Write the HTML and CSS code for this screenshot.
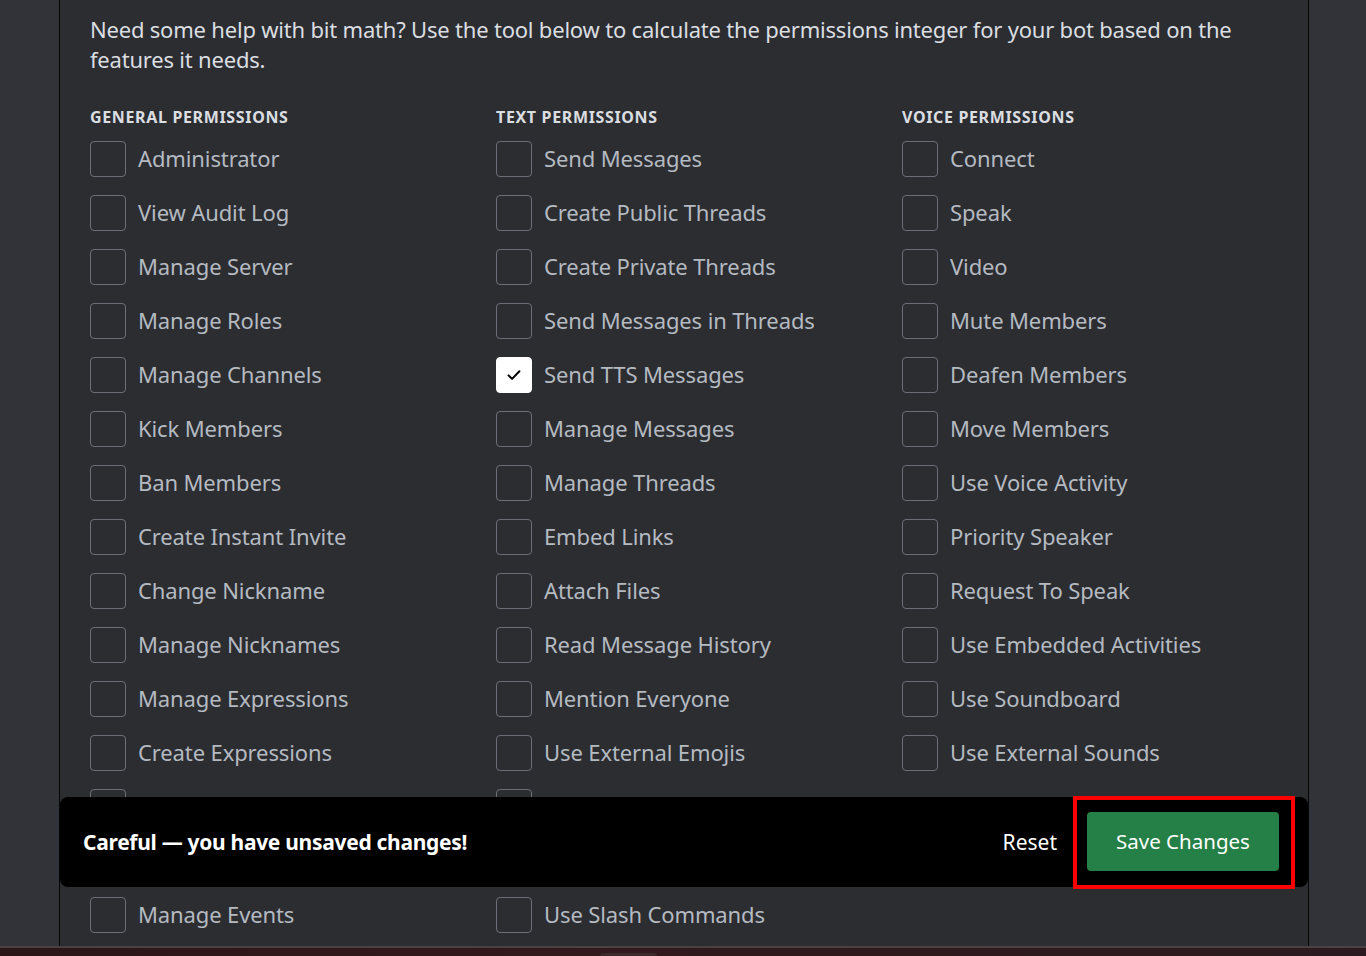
FILE: index.html
```html
<!DOCTYPE html>
<html>
<head>
<meta charset="utf-8">
<link rel="stylesheet" href="styles.css">
</head>
<body>
<div class="screen">
  <div class="main-row">
    <div class="gutter"></div>
    <div class="panel">
      <p class="intro">Need some help with bit math? Use the tool below to calculate the permissions integer for your bot based on the features it needs.</p>
      <div class="columns">
        <div class="col">
          <h3 class="col-title">General Permissions</h3>
          <label class="perm"><span class="box"></span><span class="lbl">Administrator</span></label>
          <label class="perm"><span class="box"></span><span class="lbl">View Audit Log</span></label>
          <label class="perm"><span class="box"></span><span class="lbl">Manage Server</span></label>
          <label class="perm"><span class="box"></span><span class="lbl">Manage Roles</span></label>
          <label class="perm"><span class="box"></span><span class="lbl">Manage Channels</span></label>
          <label class="perm"><span class="box"></span><span class="lbl">Kick Members</span></label>
          <label class="perm"><span class="box"></span><span class="lbl">Ban Members</span></label>
          <label class="perm"><span class="box"></span><span class="lbl">Create Instant Invite</span></label>
          <label class="perm"><span class="box"></span><span class="lbl">Change Nickname</span></label>
          <label class="perm"><span class="box"></span><span class="lbl">Manage Nicknames</span></label>
          <label class="perm"><span class="box"></span><span class="lbl">Manage Expressions</span></label>
          <label class="perm"><span class="box"></span><span class="lbl">Create Expressions</span></label>
          <label class="perm"><span class="box"></span><span class="lbl">Manage Webhooks</span></label>
          <label class="perm"><span class="box"></span><span class="lbl">View Channels</span></label>
          <label class="perm"><span class="box"></span><span class="lbl">Manage Events</span></label>
        </div>
        <div class="col">
          <h3 class="col-title">Text Permissions</h3>
          <label class="perm"><span class="box"></span><span class="lbl">Send Messages</span></label>
          <label class="perm"><span class="box"></span><span class="lbl">Create Public Threads</span></label>
          <label class="perm"><span class="box"></span><span class="lbl">Create Private Threads</span></label>
          <label class="perm"><span class="box"></span><span class="lbl">Send Messages in Threads</span></label>
          <label class="perm"><span class="box checked"><svg viewBox="0 0 24 24" width="20" height="20"><path d="M5.5 12.5l4.2 4.2 8.8-9.2" fill="none" stroke="#000" stroke-width="2.4" stroke-linecap="round" stroke-linejoin="round"/></svg></span><span class="lbl">Send TTS Messages</span></label>
          <label class="perm"><span class="box"></span><span class="lbl">Manage Messages</span></label>
          <label class="perm"><span class="box"></span><span class="lbl">Manage Threads</span></label>
          <label class="perm"><span class="box"></span><span class="lbl">Embed Links</span></label>
          <label class="perm"><span class="box"></span><span class="lbl">Attach Files</span></label>
          <label class="perm"><span class="box"></span><span class="lbl">Read Message History</span></label>
          <label class="perm"><span class="box"></span><span class="lbl">Mention Everyone</span></label>
          <label class="perm"><span class="box"></span><span class="lbl">Use External Emojis</span></label>
          <label class="perm"><span class="box"></span><span class="lbl">Use External Stickers</span></label>
          <label class="perm"><span class="box"></span><span class="lbl">Add Reactions</span></label>
          <label class="perm"><span class="box"></span><span class="lbl">Use Slash Commands</span></label>
        </div>
        <div class="col">
          <h3 class="col-title">Voice Permissions</h3>
          <label class="perm"><span class="box"></span><span class="lbl">Connect</span></label>
          <label class="perm"><span class="box"></span><span class="lbl">Speak</span></label>
          <label class="perm"><span class="box"></span><span class="lbl">Video</span></label>
          <label class="perm"><span class="box"></span><span class="lbl">Mute Members</span></label>
          <label class="perm"><span class="box"></span><span class="lbl">Deafen Members</span></label>
          <label class="perm"><span class="box"></span><span class="lbl">Move Members</span></label>
          <label class="perm"><span class="box"></span><span class="lbl">Use Voice Activity</span></label>
          <label class="perm"><span class="box"></span><span class="lbl">Priority Speaker</span></label>
          <label class="perm"><span class="box"></span><span class="lbl">Request To Speak</span></label>
          <label class="perm"><span class="box"></span><span class="lbl">Use Embedded Activities</span></label>
          <label class="perm"><span class="box"></span><span class="lbl">Use Soundboard</span></label>
          <label class="perm"><span class="box"></span><span class="lbl">Use External Sounds</span></label>
        </div>
      </div>
      <div class="notice">
        <span class="notice-text">Careful — you have unsaved changes!</span>
        <div class="notice-actions">
          <button class="btn-reset">Reset</button>
          <div class="highlight"><button class="btn-save">Save Changes</button></div>
        </div>
      </div>
    </div>
    <div class="side"></div>
  </div>
  <div class="taskbar"><span class="task-tab"></span></div>
</div>
</body>
</html>
```

FILE: styles.css
```css
* { box-sizing: border-box; }
html, body { margin: 0; padding: 0; }
body {
  width: 1366px;
  height: 956px;
  overflow: hidden;
  background: #313338;
  font-family: "Noto Sans", "Open Sans", sans-serif;
}
.screen {
  display: flex;
  flex-direction: column;
  height: 956px;
}
.main-row {
  flex: 1;
  display: flex;
  min-height: 0;
}
.gutter {
  width: 60px;
  background: #313338;
  border-right: 1px solid #050505;
}
.side {
  flex: 1;
  background: #313338;
  border-left: 1px solid #050505;
}
.panel {
  position: relative;
  width: 1248px;
  background: #2b2d31;
  padding: 14px 30px 0 30px;
  overflow: hidden;
}
.intro {
  margin: 0;
  font-size: 22px;
  line-height: 30px;
  color: #dbdee1;
  letter-spacing: -0.2px;
}
.columns {
  margin-top: 33px;
  display: grid;
  grid-template-columns: 406px 406px 406px;
}
.col {
  display: flex;
  flex-direction: column;
}
.col-title {
  margin: 0 0 14px 0;
  font-size: 16px;
  line-height: 20px;
  font-weight: 700;
  text-transform: uppercase;
  color: #dbdee1;
  letter-spacing: 0.65px;
}
.perm {
  display: flex;
  align-items: center;
  gap: 12px;
  height: 36px;
  margin-bottom: 18px;
}
.box {
  width: 36px;
  height: 36px;
  flex: none;
  border: 1px solid #6d6f78;
  border-radius: 4px;
  display: flex;
  align-items: center;
  justify-content: center;
}
.box.checked {
  background: #ffffff;
  border-color: #ffffff;
}
.lbl {
  font-size: 22px;
  line-height: 30px;
  padding-bottom: 2px;
  color: #b5bac1;
  white-space: nowrap;
  letter-spacing: -0.12px;
}
.notice {
  position: absolute;
  left: 0;
  right: 0;
  top: 797px;
  height: 90px;
  background: #000000;
  border-radius: 8px;
  display: flex;
  align-items: center;
  justify-content: space-between;
  padding: 0 13px 0 23px;
}
.notice-text {
  color: #ffffff;
  font-size: 21px;
  font-weight: 700;
  letter-spacing: -0.3px;
}
.notice-actions {
  display: flex;
  align-items: center;
  gap: 16px;
}
.btn-reset {
  background: none;
  border: none;
  color: #ffffff;
  font-family: inherit;
  font-size: 21px;
  padding: 0;
}
.highlight {
  border: 4px solid #ff0000;
  padding: 12px 12px 14px 10px;
}
.btn-save {
  width: 192px;
  height: 59px;
  background: #248046;
  border: none;
  border-radius: 4px;
  color: #ffffff;
  font-family: inherit;
  font-size: 20.5px;
}
.taskbar {
  height: 10px;
  background: linear-gradient(90deg, #2c1517, #32191c 40%, #2a1a1f);
  border-top: 2px solid #4a4142;
  position: relative;
}
.task-tab {
  display: block;
  position: absolute;
  left: 600px;
  top: 5px;
  width: 57px;
  height: 6px;
  background: #3a2a2c;
  border-radius: 4px 4px 0 0;
}
```
